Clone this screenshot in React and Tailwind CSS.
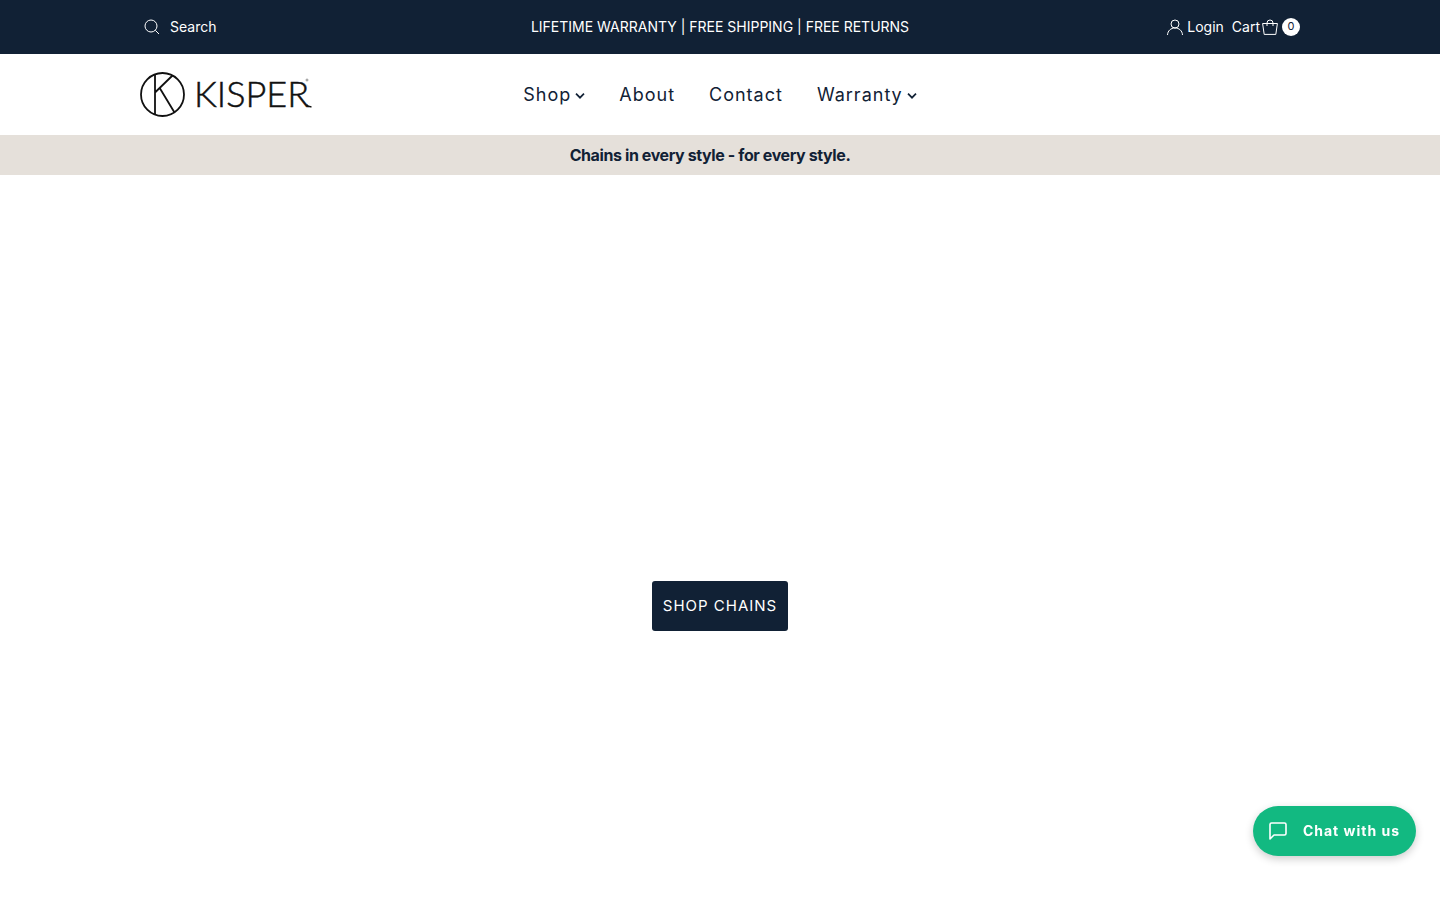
import React from "react";

const SearchIcon = () => (
  <svg className="h-4 w-4" viewBox="0 0 16 16" fill="none" stroke="currentColor" strokeWidth="1" aria-hidden="true">
    <circle cx="7" cy="7" r="6" />
    <path d="M11.3 11.3 15 15" />
  </svg>
);

const UserIcon = () => (
  <svg className="h-4 w-4" viewBox="0 0 16 16" fill="none" stroke="currentColor" strokeWidth="1" aria-hidden="true">
    <circle cx="8" cy="5" r="4" />
    <path d="M.5 16C.7 11.700 3.900 9 8 9s7.300 2.700 7.500 7" />
  </svg>
);

const BagIcon = () => (
  <svg className="h-4 w-4" viewBox="0 0 16 16" fill="none" stroke="currentColor" strokeWidth="1" aria-hidden="true">
    <path d="M.6 4.500h14.800L13.800 15.400H2.200z" />
    <path d="M5 7V4a3 3 0 0 1 6 0v3" />
  </svg>
);

const Chevron = () => (
  <svg className="mt-0.5 h-2 w-2.5" viewBox="0 0 10 8" fill="none" stroke="currentColor" strokeWidth="1.700" aria-hidden="true">
    <path d="M1 1.700 5 5.700 9 1.700" />
  </svg>
);

const Logo = () => (
  <svg className="h-12 w-[174px]" viewBox="0 0 174 48" role="img" aria-label="Kisper">
    <g fill="none" stroke="#111" strokeWidth="1.800">
      <circle cx="22.500" cy="23.500" r="21.500" />
      <path d="M15 3.500v40M32.500 4.500 15 21.500M20 17.500 34.500 41.500" />
      <path d="M166.500 33.800q2 2.300 5 1.900" strokeWidth="1.500" />
    </g>
    <text x="54" y="36" fontSize="36" fontWeight="300" fill="#111" stroke="#111" strokeWidth=".5" fontFamily="Lato, sans-serif">KISPER</text>
    <circle cx="167" cy="9" r="1" fill="none" stroke="#555" strokeWidth=".6" />
  </svg>
);

const links = [
  { label: "Shop", menu: true },
  { label: "About" },
  { label: "Contact" },
  { label: "Warranty", menu: true },
];

export default function App() {
  return (
    <div className="min-h-screen bg-white font-['Inter',sans-serif] text-[#112135]">
      <div className="bg-[#112135] text-sm text-white">
        <div className="mx-auto grid h-[54px] max-w-[1160px] grid-cols-[1fr_auto_1fr] items-center">
          <a href="#search" className="flex items-center gap-2.5 justify-self-start pl-1">
            <SearchIcon />
            Search
          </a>
          <p>LIFETIME WARRANTY | FREE SHIPPING | FREE RETURNS</p>
          <div className="flex items-center gap-2 justify-self-end">
            <a href="#login" className="flex items-center gap-1">
              <UserIcon />
              Login
            </a>
            <a href="#cart" className="flex items-center gap-0.5">
              Cart
              <BagIcon />
              <span className="ml-0.5 flex h-[18px] w-[18px] items-center justify-center rounded-full bg-white text-[11px] text-[#112135]">0</span>
            </a>
          </div>
        </div>
      </div>

      <header className="mx-auto grid h-[81px] max-w-[1160px] grid-cols-[1fr_auto_1fr] items-center">
        <a href="#home" className="justify-self-start">
          <Logo />
        </a>
        <nav className="flex items-center gap-[34px] text-lg tracking-[1px]">
          {links.map((l) => (
            <a key={l.label} href={"#" + l.label.toLowerCase()} className="flex items-center gap-1">
              {l.label}
              {l.menu && <Chevron />}
            </a>
          ))}
        </nav>
      </header>

      <div className="flex h-10 items-center justify-center bg-[#e5e0da] pr-5">
        <p className="text-base font-bold tracking-tight">Chains in every style - for every style.</p>
      </div>

      <main className="flex justify-center pt-[406px]">
        <a href="#chains" className="flex h-[50px] items-center rounded-[3px] bg-[#112135] px-[11px] text-[15px] tracking-[1px] text-white">
          SHOP CHAINS
        </a>
      </main>

      <button
        type="button"
        className="fixed right-6 bottom-11 flex h-[50px] items-center gap-4 rounded-full bg-[#12b981] px-4 text-sm font-bold tracking-[1px] text-white shadow-[0_3px_8px_rgba(0,0,0,0.2)]"
      >
        <svg className="h-[18px] w-[18px]" viewBox="0 0 18 18" fill="none" stroke="currentColor" strokeWidth="1.600" strokeLinejoin="round" aria-hidden="true">
          <path d="M1 17V2.500A1.500 1.500 0 0 1 2.500 1h13A1.500 1.500 0 0 1 17 2.500v9a1.500 1.500 0 0 1-1.500 1.500H5z" />
        </svg>
        Chat with us
      </button>
    </div>
  );
}
